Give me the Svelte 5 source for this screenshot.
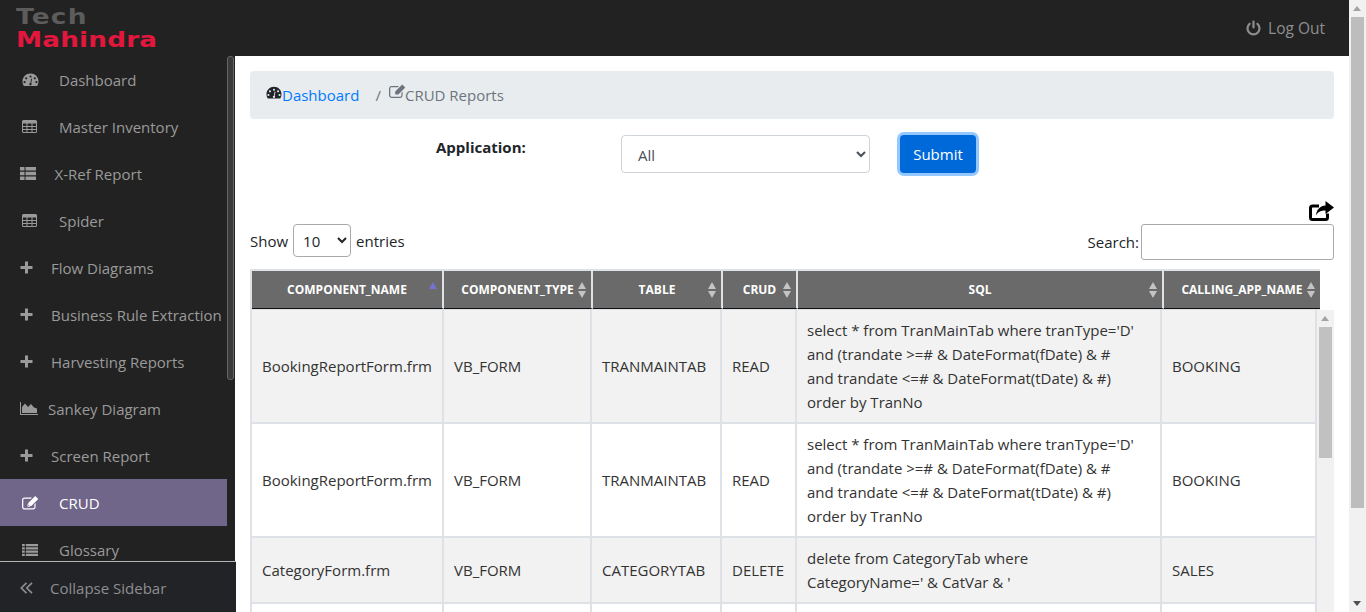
<script>
  const menu = [
    { label: 'Dashboard', icon: 'gauge', wide: true },
    { label: 'Master Inventory', icon: 'table', wide: true },
    { label: 'X-Ref Report', icon: 'thlist', mid: true },
    { label: 'Spider', icon: 'table', wide: true },
    { label: 'Flow Diagrams', icon: 'plus' },
    { label: 'Business Rule Extraction', icon: 'plus' },
    { label: 'Harvesting Reports', icon: 'plus' },
    { label: 'Sankey Diagram', icon: 'area', tight: true },
    { label: 'Screen Report', icon: 'plus' },
    { label: 'CRUD', icon: 'edit', wide: true, active: true },
    { label: 'Glossary', icon: 'list', wide: true }
  ];

  const bookingSql = "select * from TranMainTab where tranType='D' and (trandate >=# & DateFormat(fDate) & # and trandate <=# & DateFormat(tDate) & #) order by TranNo";

  const rows = [
    { name: 'BookingReportForm.frm', type: 'VB_FORM', table: 'TRANMAINTAB', crud: 'READ', sql: bookingSql, app: 'BOOKING' },
    { name: 'BookingReportForm.frm', type: 'VB_FORM', table: 'TRANMAINTAB', crud: 'READ', sql: bookingSql, app: 'BOOKING' },
    { name: 'CategoryForm.frm', type: 'VB_FORM', table: 'CATEGORYTAB', crud: 'DELETE', sql: "delete from CategoryTab where CategoryName=' & CatVar & '", app: 'SALES' },
    { name: '', type: '', table: '', crud: '', sql: '', app: '' }
  ];

  const columns = ['COMPONENT_NAME', 'COMPONENT_TYPE', 'TABLE', 'CRUD', 'SQL', 'CALLING_APP_NAME'];
</script>

{#snippet icon(name)}
  {#if name === 'gauge'}
    <svg class="ico" width="17" height="15" viewBox="0 0 17 15"><path fill="currentColor" fill-rule="evenodd" d="M8.5 1.5C4 1.5.5 5 .5 9.5c0 1.6.4 3 1.2 4.2.1.2.3.3.5.3h12.6c.2 0 .4-.1.5-.3.8-1.2 1.2-2.6 1.2-4.2 0-4.5-3.5-8-8-8zM8.5 3.4a1.1 1.1 0 1 1 0 2.2 1.1 1.1 0 0 1 0-2.2zM4.2 5.2a1.1 1.1 0 1 1 0 2.2 1.1 1.1 0 0 1 0-2.2zM12.8 5.2a1.1 1.1 0 1 1 0 2.2 1.1 1.1 0 0 1 0-2.2zM2.6 9a1.1 1.1 0 1 1 0 2.2 1.1 1.1 0 0 1 0-2.2zM14.4 9a1.1 1.1 0 1 1 0 2.2 1.1 1.1 0 0 1 0-2.2zM9.2 6.5l.9.3-.9 4.3c.4.4.6.9.4 1.4-.2.7-.9 1-1.5.8-.7-.2-1-.9-.8-1.5.1-.5.6-.9 1.1-.9z"/></svg>
  {:else if name === 'table'}
    <svg class="ico" width="15" height="13" viewBox="0 0 15 13"><path fill="currentColor" fill-rule="evenodd" d="M1.5 0h12A1.5 1.5 0 0 1 15 1.5v10a1.5 1.5 0 0 1-1.5 1.5h-12A1.5 1.5 0 0 1 0 11.500v-10A1.500 1.500 0 0 1 1.500 0zM1 3.500V6h3.500V3.500zM5.500 3.500V6h4V3.500zM10.500 3.500V6H14V3.500zM1 7v2h3.500V7zM5.500 7v2h4V7zM10.500 7v2H14V7zM1 10v1.500c0 .3.2.5.5.5h3v-2zM5.500 10v2h4v-2zM10.500 10v2h3c.3 0 .5-.2.5-.5V10z"/></svg>
  {:else if name === 'thlist'}
    <svg class="ico" width="16" height="13" viewBox="0 0 16 13"><path fill="currentColor" d="M0 0h4.500v3.500H0zM5.500 0H16v3.500H5.500zM0 4.750h4.500v3.500H0zM5.500 4.750H16v3.500H5.500zM0 9.500h4.500V13H0zM5.500 9.500H16V13H5.500z"/></svg>
  {:else if name === 'plus'}
    <svg class="ico" width="13" height="13" viewBox="0 0 13 13"><path fill="currentColor" d="M5 .5h3V5h4.500v3H8v4.500H5V8H.5V5H5z"/></svg>
  {:else if name === 'area'}
    <svg class="ico" width="18" height="13" viewBox="0 0 18 13"><path fill="currentColor" d="M0 0h1v12h17v1H0zM2 11V5l3-3.500L8 5l3-3 3 3.500 3 1V11z"/></svg>
  {:else if name === 'edit'}
    <svg class="ico" width="17" height="14" viewBox="0 0 17 14"><path fill="currentColor" fill-rule="evenodd" d="M2.500 1.500H10L8.800 2.700H2.500c-.7 0-1.200.5-1.200 1.200v7.200c0 .7.500 1.200 1.200 1.200h8.700c.7 0 1.200-.5 1.200-1.200V8.200l1.200-1.200v4.100a2.500 2.500 0 0 1-2.400 2.400H2.500A2.500 2.500 0 0 1 0 11.100V3.900a2.500 2.500 0 0 1 2.500-2.400z"/><path fill="currentColor" d="M13.200 0l3.100 3.100-7 7H6.200V7zM5.500 8v2.800H8.300z"/></svg>
  {:else if name === 'list'}
    <svg class="ico" width="16" height="12" viewBox="0 0 16 12"><path fill="currentColor" d="M0 0h2.800v2.200H0zM3.800 0H16v2.200H3.800zM0 3.200h2.800v2.200H0zM3.800 3.200H16v2.200H3.800zM0 6.500h2.800v2.200H0zM3.800 6.500H16v2.200H3.800zM0 9.800h2.800V12H0zM3.800 9.800H16V12H3.800z"/></svg>
  {/if}
{/snippet}

<div class="page">
  <div class="left">
    <div class="logo">
      <span class="tech">Tech</span>
      <span class="mahindra">Mahindra</span>
    </div>
    <div class="side">
      <nav class="menu">
        {#each menu as m}
          <div class="item" class:active={m.active}>
            <span class="icon-box" class:wide={m.wide} class:mid={m.mid} class:tight={m.tight}>
              {@render icon(m.icon)}
            </span>
            <span>{m.label}</span>
          </div>
        {/each}
      </nav>
      <div class="side-bar"><div class="side-thumb"></div></div>
    </div>
    <div class="collapse">
      <svg class="collapse-ico" width="13" height="12" viewBox="0 0 13 12"><path fill="none" stroke="currentColor" stroke-width="1.700" d="M6.500.8L1.300 6l5.200 5.200M12 .8L6.800 6l5.200 5.200"/></svg>
      <span>Collapse Sidebar</span>
    </div>
  </div>

  <div class="right">
    <header class="top">
      <svg width="15" height="16" viewBox="0 0 15 16"><path fill="none" stroke="currentColor" stroke-width="2.200" stroke-linecap="round" d="M7.500 1.500v6M3.600 3.800a6 6 0 1 0 7.800 0"/></svg>
      <span>Log Out</span>
    </header>

    <main class="main">
      <div class="crumbs">
        <svg class="crumb-gauge" width="16" height="15" viewBox="0 0 17 15"><path fill="#212529" fill-rule="evenodd" d="M8.500 1.500C4 1.500.5 5 .5 9.500c0 1.600.4 3 1.200 4.200.1.2.3.3.5.3h12.600c.2 0 .4-.1.5-.3.8-1.200 1.200-2.600 1.200-4.200 0-4.500-3.500-8-8-8zM8.500 3.400a1.100 1.100 0 1 1 0 2.200 1.100 1.100 0 0 1 0-2.200zM4.200 5.200a1.100 1.100 0 1 1 0 2.200 1.100 1.100 0 0 1 0-2.200zM12.800 5.200a1.100 1.100 0 1 1 0 2.200 1.100 1.100 0 0 1 0-2.200zM2.600 9a1.100 1.100 0 1 1 0 2.200 1.100 1.100 0 0 1 0-2.200zM14.400 9a1.100 1.100 0 1 1 0 2.200 1.100 1.100 0 0 1 0-2.200zM9.200 6.500l.9.3-.9 4.300c.4.400.6.900.4 1.400-.2.700-.9 1-1.500.8-.7-.2-1-.9-.8-1.500.1-.5.6-.9 1.100-.9z"/></svg>
        <span class="crumb-link">Dashboard</span>
        <span class="crumb-sep">/</span>
        <svg class="crumb-edit" width="17" height="15" viewBox="0 0 17 14"><path fill="#6c757d" fill-rule="evenodd" d="M2.500 1.500H10L8.800 2.700H2.500c-.7 0-1.200.5-1.200 1.200v7.200c0 .7.500 1.200 1.200 1.200h8.700c.7 0 1.200-.5 1.200-1.200V8.200l1.200-1.200v4.100a2.500 2.500 0 0 1-2.400 2.400H2.500A2.500 2.500 0 0 1 0 11.100V3.900a2.500 2.500 0 0 1 2.500-2.400z"/><path fill="#6c757d" d="M13.200 0l3.100 3.100-7 7H6.200V7z"/></svg>
        <span class="crumb-cur">CRUD Reports</span>
      </div>

      <div class="filter">
        <label class="app-label" for="app-sel">Application:</label>
        <select id="app-sel" class="app-select"><option>All</option></select>
        <button class="submit">Submit</button>
      </div>

      <div class="export">
        <svg width="25" height="20" viewBox="0 0 25 20"><path fill="none" stroke="#000" stroke-width="3" stroke-linejoin="round" d="M10 5H3.500a2 2 0 0 0-2 2v9.500a2 2 0 0 0 2 2h13a2 2 0 0 0 2-2v-4"/><path d="M16.500 0l8.500 6.500-8.500 6.500V9.500c-4.500 0-7.500 1-9.500 5 .5-5.500 3.500-9.500 9.500-10z"/></svg>
      </div>

      <div class="dt-top">
        <div class="length">
          Show
          <select class="len-select"><option>10</option></select>
          entries
        </div>
        <div class="search">
          <label for="dt-search">Search:</label>
          <input id="dt-search" class="search-input" />
        </div>
      </div>

      <div class="table-wrap">
        <table class="grid head">
          <colgroup><col class="c1" /><col class="c2" /><col class="c3" /><col class="c4" /><col class="c5" /><col class="c6" /></colgroup>
          <thead>
            <tr>
              {#each columns as col, i}
                <th>
                  {col}
                  {#if i === 0}
                    <span class="sort-up"></span>
                  {:else}
                    <span class="sort"><i></i><i></i></span>
                  {/if}
                </th>
              {/each}
            </tr>
          </thead>
        </table>
        <div class="body-scroll">
          <table class="grid body">
            <colgroup><col class="b1" /><col class="b2" /><col class="c3" /><col class="c4" /><col class="b5" /><col class="b6" /></colgroup>
            <tbody>
              {#each rows as r, i}
                <tr class:odd={i % 2 === 0}>
                  <td>{r.name}</td>
                  <td>{r.type}</td>
                  <td>{r.table}</td>
                  <td>{r.crud}</td>
                  <td class="sql">{r.sql}</td>
                  <td>{r.app}</td>
                </tr>
              {/each}
            </tbody>
          </table>
          <div class="mini-bar">
            <span class="arrow"></span>
            <div class="mini-thumb"></div>
          </div>
        </div>
      </div>
    </main>
  </div>

  <div class="page-bar">
    <span class="arrow"></span>
    <div class="page-thumb"></div>
    <span class="arrow down"></span>
  </div>
</div>

<style>
  :global(body) { margin: 0; overflow: hidden; }

  .page {
    display: flex; width: 1366px; height: 612px; overflow: hidden;
    font-family: "Open Sans", "Noto Sans", sans-serif; font-size: 15px; color: #212529;
    background: #fff;
  }

  /* Sidebar */
  .left { width: 236px; flex-shrink: 0; display: flex; flex-direction: column; }

  .logo { height: 56px; box-sizing: border-box; padding: 5px 0 0 16px; display: flex; flex-direction: column; flex-shrink: 0; background: #222; font-family: "DejaVu Sans", sans-serif; font-weight: 700; }
  .tech { color: #5c5c5c; font-size: 22px; line-height: 23px; letter-spacing: 1px; transform: scaleX(1.2); transform-origin: left; }
  .mahindra { color: #e3173e; font-size: 22px; line-height: 23px; transform: scaleX(1.19); transform-origin: left; letter-spacing: .2px; }

  .side { flex: 1; width: 235px; display: flex; min-height: 0; overflow: hidden; background: #222; }
  .menu { width: 227px; flex-shrink: 0; }

  .item {
    height: 47px; display: flex; align-items: center; color: #9a9a9a;
    padding-left: 20px; box-sizing: border-box; white-space: nowrap;
  }
  .item.active { background: #70668a; color: #fff; }

  .icon-box { width: 31px; display: flex; flex-shrink: 0; }
  .icon-box.wide { width: 39px; padding-left: 2px; box-sizing: border-box; }
  .icon-box.mid { width: 34.5px; }
  .icon-box.tight { width: 28px; }

  .side-bar { width: 8px; position: relative; }
  .side-thumb { position: absolute; left: 0; top: 0; width: 7px; height: 324px; border: 1px solid #666; border-radius: 3px; background: #3a3a3a; box-sizing: border-box; }

  .collapse {
    height: 51px; flex-shrink: 0; box-sizing: border-box; border-top: 1px solid #b5b5b5;
    background: #212327; color: #8e8e8e; display: flex; align-items: center; padding: 2px 0 0 20px;
  }
  .collapse-ico { margin-right: 17px; }

  /* Top bar */
  .right { flex: 1; min-width: 0; display: flex; flex-direction: column; }
  .top {
    height: 56px; flex-shrink: 0; background: #222; color: #8e8e8e; font-size: 15.5px;
    display: flex; align-items: center; justify-content: flex-end; gap: 7px; padding-right: 24px;
  }

  /* Content */
  .main { padding: 15px 15px 0 14px; flex: 1; min-height: 0; display: flex; flex-direction: column; overflow: hidden; }

  .crumbs {
    height: 48px; flex-shrink: 0; background: #e9ecef; border-radius: 4px;
    display: flex; align-items: center; padding-left: 16px; box-sizing: border-box;
  }
  .crumb-gauge { margin-bottom: 6px; }
  .crumb-link { color: #007bff; }
  .crumb-sep { color: #6c757d; margin: 0 8px 0 16px; }
  .crumb-edit { margin-bottom: 8px; }
  .crumb-cur { color: #6c757d; margin-left: -1px; }

  .filter { display: flex; align-items: flex-start; height: 81px; flex-shrink: 0; padding-top: 16px; box-sizing: border-box; }
  .app-label { margin-left: 186px; width: 185px; font-weight: 700; color: #212529; line-height: 24px; }
  .app-select {
    width: 249px; height: 38px; border: 1px solid #ced4da; border-radius: 4px; background: #fff;
    color: #495057; font: inherit; padding: 1px 12px 0;
  }
  .submit {
    margin-left: 30px; width: 76px; height: 38px; border: 0; border-radius: 4px; background: #0069d9; color: #fff;
    font: inherit; box-shadow: 0 0 0 3px rgba(38, 143, 255, .5);
  }

  .export { display: flex; justify-content: flex-end; height: 20px; flex-shrink: 0; margin-top: 1px; }

  .dt-top { display: flex; justify-content: space-between; align-items: flex-start; height: 42px; flex-shrink: 0; margin-top: 3px; }
  .length { display: flex; align-items: center; gap: 5px; height: 33px; }
  .len-select { width: 58px; height: 33px; border: 1px solid #aaa; border-radius: 4px; background: #fff; font: inherit; padding-left: 5px; color: #212529; }
  .search { display: flex; align-items: center; gap: 2px; }
  .search-input { width: 193px; height: 36px; box-sizing: border-box; border: 1px solid #aaa; border-radius: 3px; }

  /* Table */
  .table-wrap { flex: 1; min-height: 0; display: flex; flex-direction: column; margin-top: 3px; }
  .grid { table-layout: fixed; border-collapse: separate; border-spacing: 0; flex-shrink: 0; }
  .head { width: 1070px; background: #dee2e6; padding: 2px 0 1px 2px; box-sizing: border-box; }
  .c1 { width: 192px; }
  .c2 { width: 149px; }
  .c3 { width: 130px; }
  .c4 { width: 75px; }
  .c5 { width: 366px; }
  .c6 { width: 156px; }
  .b1 { width: 194px; }
  .b2 { width: 148px; }
  .b5 { width: 365px; }
  .b6 { width: 155px; }

  th {
    position: relative; height: 37px; background: #6a6a6a; color: #fff; font-size: 12px; font-weight: 700;
    border-right: 2px solid #dee2e6; border-bottom: 1px solid #111; padding: 0; text-align: center; white-space: nowrap;
  }
  th:last-child { border-right: 0; }

  .sort { position: absolute; right: 5px; top: 11px; display: flex; flex-direction: column; gap: 2px; }
  .sort i { display: block; border-left: 4.500px solid transparent; border-right: 4.500px solid transparent; }
  .sort i:first-child { border-bottom: 7px solid #c4c4c4; }
  .sort i:last-child { border-top: 7px solid #c4c4c4; }
  .sort-up { position: absolute; right: 5px; top: 11px; border-left: 4.500px solid transparent; border-right: 4.500px solid transparent; border-bottom: 7px solid #7373d0; }

  .body-scroll { flex: 1; min-height: 0; position: relative; overflow: hidden; }
  .body { width: 1067px; }

  td {
    padding: 8px 10px; height: 24px; line-height: 24px; border-right: 2px solid #dee2e6; border-bottom: 2px solid #dee2e6;
    vertical-align: middle; color: #333;
  }
  td:first-child { border-left: 2px solid #dee2e6; }
  td.sql { padding-right: 24px; }
  tr.odd td { background: #f2f2f2; }

  .mini-bar { position: absolute; left: 1067px; top: 0; bottom: 0; width: 17px; background: #f1f1f1; }
  .mini-thumb { position: absolute; left: 2px; top: 17px; width: 13px; height: 131px; background: #c1c1c1; }

  .arrow { position: absolute; left: 4px; top: 6px; border-left: 4px solid transparent; border-right: 4px solid transparent; border-bottom: 5px solid #a3a3a3; }

  .page-bar { width: 17px; flex-shrink: 0; background: #f1f1f1; position: relative; }
  .page-thumb { position: absolute; left: 2px; top: 17px; width: 13px; height: 491px; background: #bdbdbd; }
  .arrow.down { top: auto; bottom: 6px; border-bottom: 0; border-top: 5px solid #505050; }
</style>
